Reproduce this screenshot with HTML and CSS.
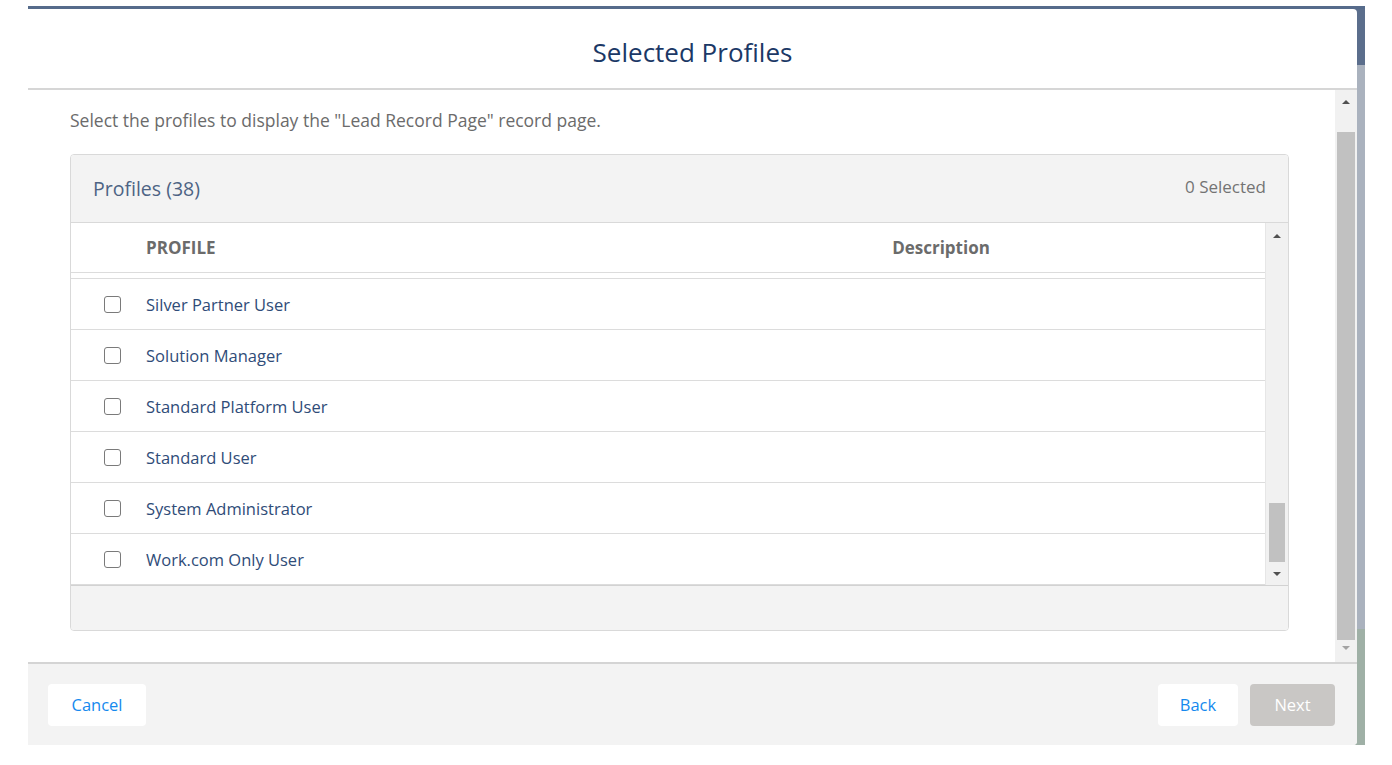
FILE: index.html
```html
<!DOCTYPE html>
<html lang="en">

<head>
    <meta charset="UTF-8">
    <meta name="viewport" content="width=device-width, initial-scale=1.0">
    <title>Selected Profiles</title>
    <link rel="stylesheet" href="styles.css">
</head>

<body>
    <div class="fundo">
        <div class="modal">
            <div class="modal-cabecalho">
                <h2>Selected Profiles</h2>
            </div>
            <div class="modal-corpo">
                <div class="conteudo">
                    <p class="intro">Select the profiles to display the "Lead Record Page" record page.</p>
                    <div class="cartao">
                        <div class="cartao-cabecalho">
                            <span class="cartao-titulo">Profiles (38)</span>
                            <span class="contador">0 Selected</span>
                        </div>
                        <div class="tabela-area">
                            <div class="tabela">
                                <div class="linha cabeca">
                                    <div></div>
                                    <div class="th">PROFILE</div>
                                    <div class="th tac">Description</div>
                                </div>
                                <div class="espaco"></div>
                                <div class="linha">
                                    <div class="tac"><span class="caixa"></span></div>
                                    <div class="nome">Silver Partner User</div>
                                    <div></div>
                                </div>
                                <div class="linha">
                                    <div class="tac"><span class="caixa"></span></div>
                                    <div class="nome">Solution Manager</div>
                                    <div></div>
                                </div>
                                <div class="linha">
                                    <div class="tac"><span class="caixa"></span></div>
                                    <div class="nome">Standard Platform User</div>
                                    <div></div>
                                </div>
                                <div class="linha">
                                    <div class="tac"><span class="caixa"></span></div>
                                    <div class="nome">Standard User</div>
                                    <div></div>
                                </div>
                                <div class="linha">
                                    <div class="tac"><span class="caixa"></span></div>
                                    <div class="nome">System Administrator</div>
                                    <div></div>
                                </div>
                                <div class="linha">
                                    <div class="tac"><span class="caixa"></span></div>
                                    <div class="nome">Work.com Only User</div>
                                    <div></div>
                                </div>
                            </div>
                            <div class="rolagem pequena">
                                <div class="seta cima"></div>
                                <div class="barra"></div>
                                <div class="seta baixo"></div>
                            </div>
                        </div>
                        <div class="cartao-rodape"></div>
                    </div>
                </div>
                <div class="rolagem grande">
                    <div class="seta cima"></div>
                    <div class="barra"></div>
                    <div class="seta baixo clara"></div>
                </div>
            </div>
            <div class="modal-rodape">
                <button class="botao cancelar">Cancel</button>
                <div class="acoes">
                    <button class="botao">Back</button>
                    <button class="botao desativado">Next</button>
                </div>
            </div>
        </div>
    </div>
</body>

</html>
```

FILE: styles.css
```css
body {
    margin: 0;
    padding: 6px 27px 0 28px;
    background-color: #fff;
    font-family: "Open Sans", "Noto Sans", sans-serif;
}

.fundo {
    display: flex;
    border-top: 3px solid #566b8b;
    background: linear-gradient(#5b6e8c 0, #5b6e8c 56px, #aab2be 56px, #aab2be 620px, #9fb0a6 620px);
}

.modal {
    width: 1329px;
    background-color: #fff;
    border-radius: 0 4px 4px 0;
    overflow: hidden;
}

.modal-cabecalho {
    height: 73px;
    padding-top: 6px;
    border-bottom: 2px solid #d6d6d6;
    display: flex;
    align-items: center;
    justify-content: center;
}

.modal-cabecalho h2 {
    margin: 0;
    font-size: 26px;
    font-weight: 400;
    color: #1b3866;
}

.modal-corpo {
    display: flex;
    height: 572px;
}

.conteudo {
    flex: 1;
    padding: 20px 46px 32px 42px;
}

.intro {
    margin: 0 0 24px;
    font-size: 17.5px;
    line-height: 20px;
    color: #6b6b6b;
}

.cartao {
    border: 1px solid #d9d9d9;
    border-radius: 4px;
    overflow: hidden;
}

.cartao-cabecalho {
    height: 67px;
    padding: 0 22px;
    display: flex;
    align-items: center;
    justify-content: space-between;
    background-color: #f3f3f3;
    border-bottom: 1px solid #d9d9d9;
}

.cartao-titulo {
    font-size: 19.5px;
    color: #4d6384;
}

.contador {
    font-size: 17px;
    color: #737373;
    margin-top: -4px;
}

.tabela-area {
    display: flex;
    height: 362px;
}

.tabela {
    flex: 1;
}

.linha {
    display: grid;
    grid-template-columns: 75px 471px 1fr;
    align-items: center;
    height: 50px;
    border-bottom: 1px solid #dcdcdc;
}

.linha.cabeca {
    height: 49px;
}

.espaco {
    height: 5px;
    border-bottom: 1px solid #dcdcdc;
}

.th {
    font-size: 17px;
    font-weight: 700;
    color: #6b6b6b;
}

.tac {
    text-align: center;
}

.caixa {
    display: inline-block;
    width: 15px;
    height: 15px;
    margin: 0 0 2px 8px;
    border: 1.5px solid #7a7a7a;
    border-radius: 3px;
    vertical-align: middle;
}

.nome {
    font-size: 16.5px;
    color: #2f4c78;
}

.cartao-rodape {
    height: 44px;
    background-color: #f3f3f3;
    border-top: 1px solid #d2d2d2;
}

.rolagem {
    display: flex;
    flex-direction: column;
    background-color: #f1f1f1;
}

.rolagem.pequena {
    width: 23px;
    padding: 0 3px 0 3px;
    box-sizing: border-box;
    border-left: 1px solid #e6e6e6;
}

.rolagem.grande {
    width: 22px;
    padding: 0 2px;
    box-sizing: border-box;
}

.seta {
    display: flex;
    align-items: center;
    justify-content: center;
}

.seta::after {
    content: '';
    border-left: 4px solid transparent;
    border-right: 4px solid transparent;
}

.seta.cima::after {
    border-bottom: 4px solid #505050;
}

.seta.baixo::after {
    border-top: 4px solid #505050;
}

.seta.baixo.clara::after {
    border-top-color: #a3a3a3;
}

.pequena .seta.cima {
    height: 26px;
}

.pequena .barra {
    margin-top: 254px;
    height: 59px;
    background-color: #c1c1c1;
}

.pequena .seta.baixo {
    flex: 1;
}

.grande .seta.cima {
    height: 24px;
}

.grande .barra {
    margin-top: 18px;
    height: 508px;
    background-color: #c1c1c1;
}

.grande .seta.baixo {
    height: 16px;
}

.modal-rodape {
    display: flex;
    justify-content: space-between;
    align-items: center;
    height: 81px;
    padding: 0 22px 0 20px;
    background-color: #f3f3f3;
    border-top: 2px solid #d4d4d4;
}

.acoes {
    display: flex;
    gap: 12px;
}

.botao {
    height: 42px;
    padding: 0;
    border: none;
    border-radius: 4px;
    background-color: #fff;
    color: #1589ee;
    font-family: "Open Sans", "Noto Sans", sans-serif;
    font-size: 16.5px;
}

.cancelar {
    width: 98px;
}

.acoes .botao {
    width: 80px;
}

.botao.desativado {
    width: 85px;
    background-color: #c9c7c5;
    color: #fff;
}
```
